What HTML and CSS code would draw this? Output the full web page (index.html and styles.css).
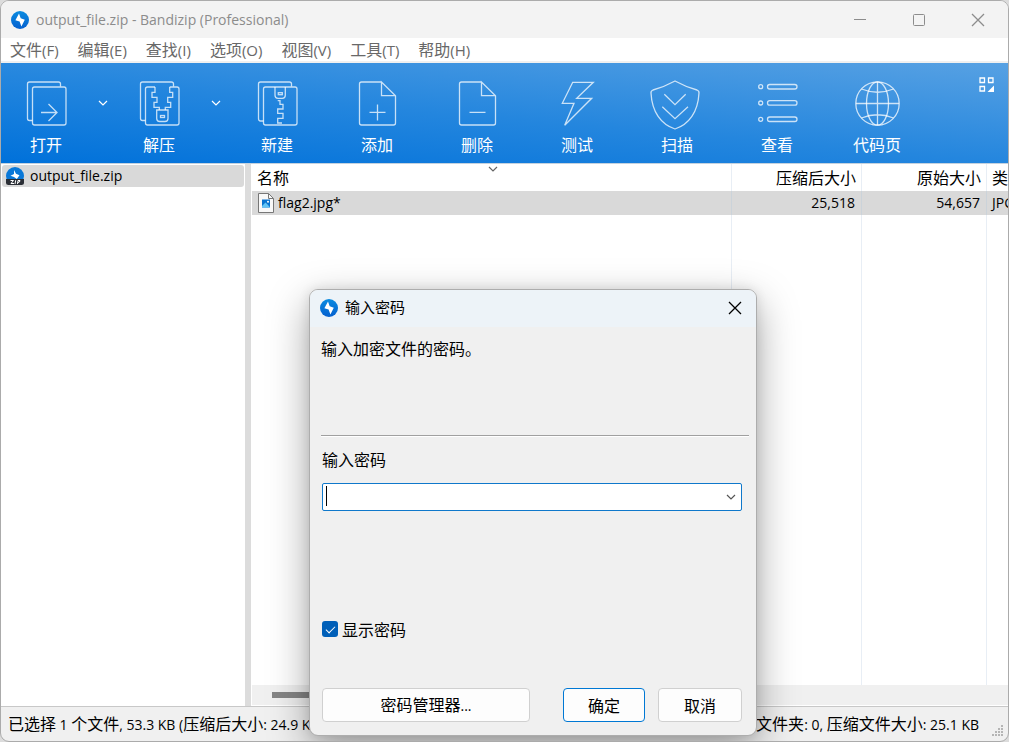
FILE: index.html
```html
<!DOCTYPE html>
<html lang="zh-CN">
<head>
<meta charset="utf-8">
<title>output_file.zip - Bandizip (Professional)</title>
<link rel="stylesheet" href="styles.css">
</head>
<body>
<svg class="defs" aria-hidden="true">
  <defs>
    <linearGradient id="logo-fill" x1="0" y1="0" x2="0" y2="1"><stop offset="0" stop-color="#0a8be0"/><stop offset="1" stop-color="#0560cf"/></linearGradient>
    <symbol id="logo" viewBox="0 0 18 18">
      <circle cx="9" cy="9" r="9" fill="url(#logo-fill)"/>
      <path d="M8 2.5L9.7 7.3L13.8 8.7L10.4 15.5L8.6 10.6L4.4 9.2Z" fill="#fff"/>
    </symbol>
    <symbol id="chevron" viewBox="0 0 10 6"><path d="M1 1L5 5L9 1" fill="none" stroke="currentColor" stroke-width="1.2"/></symbol>
    <symbol id="cross" viewBox="0 0 14 14"><path d="M1 1L13 13M13 1L1 13" fill="none" stroke="currentColor" stroke-width="1.3"/></symbol>
  </defs>
</svg>
<div class="window">
  <header class="titlebar">
    <svg class="logo"><use href="#logo"/></svg>
    <h1 class="title">output_file.zip - Bandizip (Professional)</h1>
    <div class="window-controls">
      <button aria-label="最小化"><svg viewBox="0 0 14 14"><path d="M1 6.5H13" stroke="currentColor"/></svg></button>
      <button aria-label="最大化"><svg viewBox="0 0 14 14"><rect x="1.5" y="1.5" width="11" height="11" rx="1" fill="none" stroke="currentColor"/></svg></button>
      <button aria-label="关闭"><svg><use href="#cross"/></svg></button>
    </div>
  </header>
  <nav class="menubar">
    <button>文件<span>(F)</span></button>
    <button>编辑<span>(E)</span></button>
    <button>查找<span>(I)</span></button>
    <button>选项<span>(O)</span></button>
    <button>视图<span>(V)</span></button>
    <button>工具<span>(T)</span></button>
    <button>帮助<span>(H)</span></button>
  </nav>
  <div class="toolbar">
    <button class="tool tool-split">
      <svg viewBox="0 0 48 48"><path d="M38.5 6.5V4Q38.5 2 36.5 2H7.5Q5.5 2 5.5 4V38.5Q5.5 40.5 7.5 40.5H10.5"/><rect x="10.5" y="7" width="33.5" height="38" rx="2"/><path d="M19 32.5H35M26.5 24L35 32.5L26.5 41"/></svg>
      打开</button>
    <button class="drop" aria-label="打开选项"><svg><use href="#chevron"/></svg></button>
    <button class="tool tool-split">
      <svg viewBox="0 0 48 48"><path d="M38.5 6.5V4Q38.5 2 36.5 2H7.5Q5.5 2 5.5 4V38.5Q5.5 40.5 7.5 40.5H10.5"/><path d="M20 7H12.5Q10.5 7 10.5 9V43Q10.5 45 12.5 45H42Q44 45 44 43V9Q44 7 42 7H34.7"/><path d="M20 7V12.3H17V17.3H22V22.3H19V27.3H24.3V30M34.7 7V12.3H37.7V17.3H32.7V22.3H35.7V27.3H30.3V30"/><path d="M21.7 30H33V38.5Q33 41.5 30 41.5H24.7Q21.7 41.5 21.7 38.5Z"/><rect x="25.5" y="35.5" width="4" height="2"/></svg>
      解压</button>
    <button class="drop" aria-label="解压选项"><svg><use href="#chevron"/></svg></button>
    <button class="tool">
      <svg viewBox="0 0 48 48"><path d="M38.5 6.5V4Q38.5 2 36.5 2H7.5Q5.5 2 5.5 4V38.5Q5.5 41 7.5 41H10.5"/><rect x="10.5" y="7" width="33.5" height="38" rx="2"/><path d="M22 7V15.3Q22 18.3 25 18.3H29.3Q32.3 18.3 32.3 15.3V7"/><rect x="25.3" y="12.7" width="4" height="2"/><path d="M24.7 20.7H27V24.3H30V29H24.7V33.3H30V38.3H24.7V43H29"/></svg>
      新建</button>
    <button class="tool">
      <svg viewBox="0 0 48 48"><path d="M28.5 2H8.5Q6.5 2 6.5 4V43Q6.5 45 8.5 45H40.5Q42.5 45 42.5 43V15.7L28.5 2V15.7H42.5M16.5 32.3H32.5M24.5 24.5V40.5"/></svg>
      添加</button>
    <button class="tool">
      <svg viewBox="0 0 48 48"><path d="M28.5 2H8.5Q6.5 2 6.5 4V43Q6.5 45 8.5 45H40.5Q42.5 45 42.5 43V15.7L28.5 2V15.7H42.5M16.5 32.3H32.5"/></svg>
      删除</button>
    <button class="tool">
      <svg viewBox="0 0 48 48"><path d="M19.7 2.3H40.3L23.7 18.3H38.7L11.7 45.3L21 23.3H9.3Z"/></svg>
      测试</button>
    <button class="tool">
      <svg viewBox="0 0 48 48"><path d="M22 1Q33 7 44 10Q46.3 11 46 13C45 32 36 44.5 22 49C8 44.5 -1 32 -2 13Q-2.3 11 0 10Q11 7 22 1ZM11.3 14.3L22 24.7L32.7 14.3M9.3 26.7L22 38.7L35 26.7"/></svg>
      扫描</button>
    <button class="tool">
      <svg viewBox="0 0 48 48"><circle cx="7.7" cy="6.7" r="2"/><circle cx="7.7" cy="23" r="2"/><circle cx="7.7" cy="39.3" r="2"/><rect x="14.5" y="4.5" width="29.5" height="4.5" rx="2.2"/><rect x="14.5" y="20.7" width="29.5" height="4.5" rx="2.2"/><rect x="14.5" y="37" width="29.5" height="4.5" rx="2.2"/></svg>
      查看</button>
    <button class="tool">
      <svg viewBox="0 0 48 48"><circle cx="24.5" cy="23.5" r="21.7"/><ellipse cx="24.5" cy="23.5" rx="11" ry="21.7"/><path d="M24.5 2V45M3 23.5H46M8.5 9Q24.5 15.5 40.5 9M8.5 38Q24.5 31.5 40.5 38"/></svg>
      代码页</button>
    <button class="layout" aria-label="工具栏布局"><svg viewBox="0 0 16 16"><path d="M1 1H5.5V5.5H1ZM9.5 1H14V5.5H9.5ZM1 9.5H5.5V14H1Z" fill="none" stroke="#fff" stroke-width="1.3"/><path d="M15 8.5V15H8.5Z" fill="#fff"/></svg></button>
  </div>
  <main class="content">
    <aside class="tree">
      <button class="tree-item">
        <svg viewBox="0 0 18 18"><circle cx="9" cy="9" r="9" fill="#0a78d8"/><path d="M8 3L10 6.8L13.5 8.3L10.8 12L8 10L4.5 8.8L8 7Z" fill="#fff"/><path d="M0 12H18V15.5Q18 18 15.5 18H2.5Q0 18 0 15.5Z" fill="#2b2f36"/><path d="M4.5 13.5H7.5L5 16.5H8M9.7 13.2L9 17M11.5 17L12 13.5H14Q14 15.5 11.8 15.5" fill="none" stroke="#fff"/></svg>
        output_file.zip</button>
    </aside>
    <section class="list">
      <svg class="sort"><use href="#chevron"/></svg>
      <table class="files">
        <colgroup><col><col class="col-packed"><col class="col-size"><col class="col-type"></colgroup>
        <thead><tr><th>名称</th><th class="num">压缩后大小</th><th class="num">原始大小</th><th>类型</th></tr></thead>
        <tbody>
          <tr class="selected">
            <td><div class="file"><svg viewBox="0 0 16 20"><path d="M.5 .5H10.5L15.5 5.5V19.5H.5Z" fill="#f8f8f8" stroke="#777"/><path d="M10.5 .5V5.5H15.5" fill="none" stroke="#777"/><rect x="4" y="6.5" width="8" height="8" fill="#0873cf"/><path d="M4 13L7.5 9.5L10 12L12 14.5H4Z" fill="#62c4f5"/><circle cx="10" cy="8.7" r="1" fill="#fff"/></svg>flag2.jpg*</div></td>
            <td class="num">25,518</td><td class="num">54,657</td><td>JPG</td>
          </tr>
          <tr class="filler"><td></td><td></td><td></td><td></td></tr>
        </tbody>
      </table>
      <div class="scrollbar"><div class="thumb"></div></div>
    </section>
  </main>
  <footer class="statusbar">
    <p>已选择 <span>1</span> 个文件<span>, 53.3 KB (</span>压缩后大小<span>: 24.9 KB)</span></p>
    <p>文件夹<span>: 0, </span>压缩文件大小<span>: 25.1 KB</span></p>
    <svg class="grip" viewBox="0 0 12 12"><path d="M10 1H12M7 4H9M10 4H12M4 7H6M7 7H9M10 7H12M1 10H3M4 10H6M7 10H9M10 10H12" stroke="#b5b5b5" stroke-width="2"/></svg>
  </footer>
  <form class="dialog" role="dialog" aria-labelledby="dialog-title">
    <header class="dialog-title">
      <svg class="logo"><use href="#logo"/></svg>
      <h2 id="dialog-title">输入密码</h2>
      <button type="button" aria-label="关闭"><svg><use href="#cross"/></svg></button>
    </header>
    <p class="message">输入加密文件的密码。</p>
    <div class="fields">
      <label for="password">输入密码</label>
      <div class="combo">
        <input id="password" type="text" autocomplete="off">
        <button type="button" aria-label="历史密码"><svg><use href="#chevron"/></svg></button>
      </div>
      <label class="check"><input type="checkbox" checked>显示密码</label>
      <div class="actions">
        <button type="button" class="manager">密码管理器<span>...</span></button>
        <button type="submit" class="primary">确定</button>
        <button type="button">取消</button>
      </div>
    </div>
  </form>
</div>
</body>
</html>
```
FILE: styles.css
```css
* { box-sizing: border-box; }
html, body { height: 100%; }
body {
  margin: 0;
  background: #dcdcdc;
  color: #000;
  font: 16px/20px "Noto Sans CJK SC", sans-serif;
}
h1, h2, p { margin: 0; font-weight: 400; }
button {
  padding: 0;
  border: 0;
  background: none;
  color: inherit;
  font: inherit;
}
svg { display: block; flex: none; }
.defs { position: absolute; width: 0; height: 0; }
.logo { width: 18px; height: 18px; }

.window {
  position: relative;
  display: flex;
  flex-direction: column;
  height: 100vh;
  overflow: hidden;
  border: 1px solid #ababab;
  border-radius: 9px;
  background: #f0f0f0;
}

.titlebar {
  display: flex;
  align-items: center;
  gap: 7px;
  height: 37px;
  padding: 0 1px 0 10px;
  background: #f3f3f3;
  color: #8c8c8c;
}
.title { font: 14px/20px "Open Sans", sans-serif; }
.window-controls { display: flex; margin-left: auto; }
.window-controls button { display: grid; place-items: center; width: 59px; height: 36px; }
.window-controls svg { width: 14px; height: 14px; }

.menubar {
  display: flex;
  gap: 19px;
  height: 25px;
  padding-left: 9px;
  border-bottom: 2px solid #f0f0f0;
  background: #fff;
  color: #686868;
}
.menubar span { font: 15px/20px "Open Sans", sans-serif; }

.toolbar {
  display: flex;
  height: 101px;
  border-bottom: 1px solid #c4d2df;
  background: linear-gradient(5deg, #0071da, #2486de 47%, #57a1e3);
  color: #fff;
}
.tool {
  display: flex;
  flex-direction: column;
  align-items: center;
  gap: 6px;
  width: 100px;
  padding-top: 17px;
}
.tool-split { width: 90px; }
.tool svg {
  width: 48px;
  height: 48px;
  overflow: visible;
  fill: none;
  stroke: rgba(255, 255, 255, .75);
  stroke-width: 1.3;
}
.drop { display: grid; justify-content: center; width: 23px; padding-top: 37px; align-content: start; }
.drop svg { width: 10px; height: 6px; }
.layout { align-self: flex-start; margin: 14px 13px 0 auto; }
.layout svg { width: 16px; height: 16px; }

.content { display: flex; flex: 1; min-height: 0; background: #fff; }
.tree { width: 250px; padding: 1px 1px 0; border-right: 6px solid #dcdcdc; }
.tree-item {
  display: flex;
  align-items: center;
  gap: 6px;
  width: 100%;
  height: 22px;
  padding-left: 4px;
  border-radius: 3px;
  background: #d9d9d9;
  font: 14px/20px "Open Sans", sans-serif;
}
.tree-item svg { width: 18px; height: 18px; }
.list {
  position: relative;
  display: flex;
  flex: 1;
  flex-direction: column;
  min-width: 0;
  padding: 0 0 1px 1px;
}
.sort { position: absolute; top: 2px; left: 50%; width: 10px; height: 6px; margin-left: -142px; color: #666; }
.files { flex: 1; width: 100%; table-layout: fixed; border-collapse: separate; border-spacing: 0; }
.col-packed { width: 130px; }
.col-size { width: 125px; }
.col-type { width: 21px; }
.files th, .files td {
  overflow: hidden;
  padding: 0 5px;
  border-right: 1px solid #e8eef5;
  text-align: left;
  font-weight: 400;
  white-space: nowrap;
}
.files th { height: 27px; padding: 0 5px 1px; }
.files td { height: 24px; font: 14px/20px "Open Sans", sans-serif; }
.files th:last-child, .files td:last-child { padding-right: 0; border-right: 0; }
.files td:first-child { padding-left: 6px; }
.files .num { text-align: right; }
.files td.num { padding-right: 6px; }
.selected td { background: #d9d9d9; border-right-color: #cbd3da; }
.files .filler td { height: auto; }
.file { display: flex; align-items: center; gap: 4px; }
.file svg { width: 16px; height: 20px; }
.scrollbar { display: flex; align-items: center; height: 20px; padding-left: 20px; background: #f0f0f0; }
.thumb { width: 58%; height: 6px; background: #858585; }

.statusbar {
  display: flex;
  align-items: center;
  justify-content: space-between;
  height: 35px;
  padding: 0 5px 0 7px;
  border-top: 1px solid #c8c8c8;
  white-space: nowrap;
}
.statusbar p + p { margin-left: auto; }
.statusbar span, .manager span { font: 14px/20px "Open Sans", sans-serif; white-space: pre; }
.grip { align-self: flex-end; width: 12px; height: 12px; margin: 0 0 4px 12px; }

.dialog {
  position: absolute;
  top: 288px;
  left: 308px;
  width: 448px;
  overflow: hidden;
  border: 1px solid #adadad;
  border-radius: 9px;
  background: #f0f0f0;
  box-shadow: 0 14px 40px rgba(0, 0, 0, .36), 0 0 12px rgba(0, 0, 0, .1);
}
.dialog-title {
  display: flex;
  align-items: center;
  gap: 7px;
  height: 37px;
  padding: 0 14px 2px 10px;
  background: #edf3f8;
}
.dialog-title h2 { padding-bottom: 2px; font-size: 15px; }
.dialog-title button { margin-left: auto; }
.dialog-title button svg { width: 14px; height: 14px; }
.message { height: 109px; margin: 0 7px 0 11px; padding-top: 11px; border-bottom: 1px solid #a0a0a0; box-shadow: 0 1px #fff; }
.fields { display: flex; flex-direction: column; padding: 13px 14px 13px 12px; }
.combo { display: flex; height: 28px; margin: 14px 0 108px; border: 1px solid #0f78cb; border-radius: 2px; background: #fff; }
.combo input {
  flex: 1;
  min-width: 0;
  padding: 0 6px;
  border: 0;
  outline: 0;
  background: linear-gradient(#000, #000) 3px 2px / 1px 20px no-repeat;
  font: inherit;
}
.combo button { display: grid; place-items: center; width: 20px; color: #555; }
.combo svg { width: 10px; height: 6px; }
.check { display: flex; align-items: center; gap: 4px; }
.check input {
  width: 16px;
  height: 16px;
  margin: 0;
  border-radius: 3px;
  appearance: none;
  background: #005fb8;
  display: grid;
  place-items: center;
}
.check input:checked::before {
  content: "";
  width: 8px;
  height: 4px;
  border: solid #fff;
  border-width: 0 0 1px 1px;
  transform: translateY(-1px) rotate(-45deg);
}
.actions { display: flex; gap: 13px; margin-top: 49px; }
.actions button { width: 84px; height: 34px; padding-bottom: 1px; border: 1px solid #d0d0d0; border-radius: 4px; background: #fdfdfd; }
.actions .manager { width: 208px; margin-right: auto; }
.actions .primary { width: 82px; border-color: #0078d4; }
```
